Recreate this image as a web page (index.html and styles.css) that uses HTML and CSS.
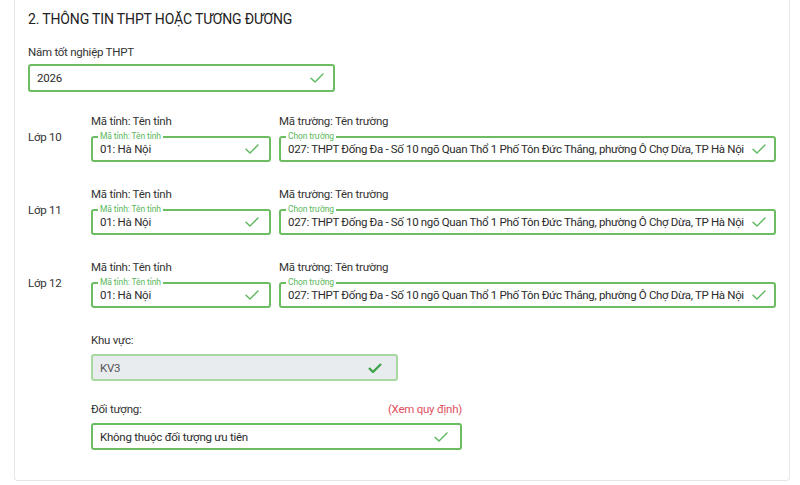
FILE: index.html
```html
<!DOCTYPE html>
<html lang="vi">
<head>
  <meta charset="UTF-8">
  <meta name="viewport" content="width=device-width, initial-scale=1.0">
  <title>Thông tin THPT</title>
  <link rel="stylesheet" href="styles.css">
</head>
<body>
  <div class="card">
    <h2 class="section-title">2. THÔNG TIN THPT HOẶC TƯƠNG ĐƯƠNG</h2>

    <!-- Graduation year -->
    <div class="field year-field">
      <label class="field-label">Năm tốt nghiệp THPT</label>
      <div class="input valid">
        <span class="value">2026</span>
        <svg class="check" viewBox="0 0 14 10"><path d="M1 5.2 L5 9 L13 1"/></svg>
      </div>
    </div>

    <!-- School per grade -->
    <div class="grade-row">
      <div class="grade-name">Lớp 10</div>
      <div class="field">
        <label class="field-label">Mã tỉnh: Tên tỉnh</label>
        <div class="input valid">
          <span class="legend">Mã tỉnh: Tên tỉnh</span>
          <span class="value">01: Hà Nội</span>
          <svg class="check" viewBox="0 0 14 10"><path d="M1 5.2 L5 9 L13 1"/></svg>
        </div>
      </div>
      <div class="field school">
        <label class="field-label">Mã trường: Tên trường</label>
        <div class="input valid">
          <span class="legend">Chọn trường</span>
          <span class="value">027: THPT Đống Đa - Số 10 ngõ Quan Thổ 1 Phố Tôn Đức Thắng, phường Ô Chợ Dừa, TP Hà Nội</span>
          <svg class="check" viewBox="0 0 14 10"><path d="M1 5.2 L5 9 L13 1"/></svg>
        </div>
      </div>
    </div>

    <div class="grade-row">
      <div class="grade-name">Lớp 11</div>
      <div class="field">
        <label class="field-label">Mã tỉnh: Tên tỉnh</label>
        <div class="input valid">
          <span class="legend">Mã tỉnh: Tên tỉnh</span>
          <span class="value">01: Hà Nội</span>
          <svg class="check" viewBox="0 0 14 10"><path d="M1 5.2 L5 9 L13 1"/></svg>
        </div>
      </div>
      <div class="field school">
        <label class="field-label">Mã trường: Tên trường</label>
        <div class="input valid">
          <span class="legend">Chọn trường</span>
          <span class="value">027: THPT Đống Đa - Số 10 ngõ Quan Thổ 1 Phố Tôn Đức Thắng, phường Ô Chợ Dừa, TP Hà Nội</span>
          <svg class="check" viewBox="0 0 14 10"><path d="M1 5.2 L5 9 L13 1"/></svg>
        </div>
      </div>
    </div>

    <div class="grade-row">
      <div class="grade-name">Lớp 12</div>
      <div class="field">
        <label class="field-label">Mã tỉnh: Tên tỉnh</label>
        <div class="input valid">
          <span class="legend">Mã tỉnh: Tên tỉnh</span>
          <span class="value">01: Hà Nội</span>
          <svg class="check" viewBox="0 0 14 10"><path d="M1 5.2 L5 9 L13 1"/></svg>
        </div>
      </div>
      <div class="field school">
        <label class="field-label">Mã trường: Tên trường</label>
        <div class="input valid">
          <span class="legend">Chọn trường</span>
          <span class="value">027: THPT Đống Đa - Số 10 ngõ Quan Thổ 1 Phố Tôn Đức Thắng, phường Ô Chợ Dừa, TP Hà Nội</span>
          <svg class="check" viewBox="0 0 14 10"><path d="M1 5.2 L5 9 L13 1"/></svg>
        </div>
      </div>
    </div>

    <!-- Area and priority group -->
    <div class="extra">
      <div class="field area-field">
        <label class="field-label">Khu vực:</label>
        <div class="input valid disabled">
          <span class="value">KV3</span>
          <svg class="check bold" viewBox="0 0 14 10"><path d="M1 5 L5 9 L13 1"/></svg>
        </div>
      </div>
      <div class="field target-field">
        <div class="label-row">
          <label class="field-label">Đối tượng:</label>
          <a class="rule-link" href="#">(Xem quy định)</a>
        </div>
        <div class="input valid">
          <span class="value">Không thuộc đối tượng ưu tiên</span>
          <svg class="check" viewBox="0 0 14 10"><path d="M1 5.2 L5 9 L13 1"/></svg>
        </div>
      </div>
    </div>
  </div>
</body>
</html>
```

FILE: styles.css
```css
html, body {
  margin: 0;
  padding: 0;
  background: #ffffff;
}
body {
  font-family: Roboto, "Noto Sans", sans-serif;
  color: #333;
  font-size: 11.5px;
  letter-spacing: -0.25px;
}

/* Card is scrolled, top edge sits above the window */
.card {
  margin: 0 10px 0 14px;
  border: 1px solid #e6e6e6;
  border-top: 0;
  border-radius: 0 0 4px 4px;
  padding: 9px 13px 30px 13px;
}

.section-title {
  margin: 0 0 13px 0;
  font-size: 14px;
  line-height: 20px;
  font-weight: 400;
  letter-spacing: -0.15px;
  color: #222;
}

.field {
  display: flex;
  flex-direction: column;
  min-width: 0;
}
.field-label {
  line-height: 20px;
  margin-bottom: 4px;
}

/* Input box with green "valid" border */
.input {
  position: relative;
  display: flex;
  align-items: center;
  height: 27px;
  box-sizing: border-box;
  padding: 0 12px 0 7px;
  border: 2px solid #6cbd62;
  border-radius: 3px;
  background: #fff;
}
.input .value {
  flex: 1;
  min-width: 0;
  white-space: nowrap;
  overflow: hidden;
  color: #2b2b2b;
}
.input.disabled {
  background: #e9ecef;
  border-color: #a9d8a3;
}
.input.disabled .value {
  color: #555;
}

.check {
  width: 14px;
  height: 10px;
  flex: none;
  margin-left: 6px;
  fill: none;
  stroke: #5cb85c;
  stroke-width: 1.4;
  stroke-linecap: round;
  stroke-linejoin: round;
}
.check.bold {
  stroke: #3fa34d;
  stroke-width: 2.4;
  stroke-linecap: butt;
}

/* Small floating caption on the top border */
.legend {
  position: absolute;
  top: -7px;
  left: 5px;
  padding: 0 2px;
  background: #fff;
  font-size: 8.5px;
  line-height: 10px;
  letter-spacing: -0.1px;
  color: #5cb85c;
}

.year-field {
  width: 307px;
}
.year-field .field-label {
  margin-bottom: 2px;
}
.year-field .input {
  height: 28px;
}
.year-field .check {
  margin-right: -3px;
}

.grade-row {
  display: grid;
  grid-template-columns: 55px 180px minmax(0, 1fr);
  column-gap: 8px;
  align-items: center;
  margin-top: 19px;
}
.grade-row .input {
  height: 26px;
}
.grade-row .field-label {
  margin-bottom: 5px;
}
.grade-row + .grade-row {
  margin-top: 22px;
}
.grade-row .check {
  margin-right: -2px;
}
.school .input {
  padding-right: 10px;
}
.school .value {
  letter-spacing: -0.33px;
}
.school .check {
  margin-left: 4px;
}

.extra {
  margin-left: 63px;
  margin-top: 22px;
}
.area-field {
  width: 307px;
}
.area-field .check {
  margin-right: 2px;
}
.target-field {
  width: 371px;
  margin-top: 18px;
}
.label-row {
  display: flex;
  justify-content: space-between;
}
.rule-link {
  color: #e0505f;
  text-decoration: none;
  line-height: 20px;
}
```
